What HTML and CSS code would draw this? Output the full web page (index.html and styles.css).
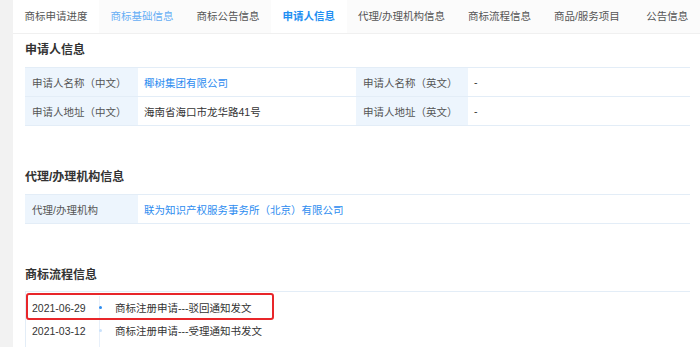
FILE: index.html
```html
<!DOCTYPE html>
<html lang="zh-CN">
<head>
<meta charset="utf-8">
<title>申请人信息</title>
<link rel="stylesheet" href="styles.css">
</head>
<body>
<div class="page">
  <aside class="side"></aside>
  <main class="main">
    <nav class="tabs">
      <span class="tab tab-first">商标申请进度</span>
      <span class="tab tab-hover">商标基础信息</span>
      <span class="tab">商标公告信息</span>
      <span class="tab tab-active">申请人信息</span>
      <span class="tab">代理/办理机构信息</span>
      <span class="tab">商标流程信息</span>
      <span class="tab">商品/服务项目</span>
      <span class="tab tab-last">公告信息</span>
    </nav>
    <div class="content">
      <section class="sec">
        <h2 class="sec-title">申请人信息</h2>
        <table class="info">
          <colgroup>
            <col class="c-label"><col class="c-value"><col class="c-label2"><col>
          </colgroup>
          <tr>
            <th>申请人名称（中文）</th>
            <td><a class="link">椰树集团有限公司</a></td>
            <th>申请人名称（英文）</th>
            <td>-</td>
          </tr>
          <tr>
            <th>申请人地址（中文）</th>
            <td>海南省海口市龙华路41号</td>
            <th>申请人地址（英文）</th>
            <td>-</td>
          </tr>
        </table>
      </section>
      <section class="sec">
        <h2 class="sec-title">代理/办理机构信息</h2>
        <table class="info">
          <colgroup>
            <col class="c-label"><col>
          </colgroup>
          <tr>
            <th>代理/办理机构</th>
            <td><a class="link">联为知识产权服务事务所（北京）有限公司</a></td>
          </tr>
        </table>
      </section>
      <section class="sec">
        <h2 class="sec-title sec-title-flow">商标流程信息</h2>
        <div class="flow">
          <div class="flow-row">
            <span class="flow-date">2021-06-29</span>
            <span class="flow-axis"><i class="dot dot-on"></i></span>
            <span class="flow-text">商标注册申请---驳回通知发文</span>
          </div>
          <div class="flow-row">
            <span class="flow-date">2021-03-12</span>
            <span class="flow-axis"><i class="dot"></i></span>
            <span class="flow-text">商标注册申请---受理通知书发文</span>
          </div>
          <div class="flow-row">
            <span class="flow-date">2020-12-29</span>
            <span class="flow-axis"><i class="dot"></i></span>
            <span class="flow-text">商标注册申请---申请收文</span>
          </div>
          <div class="mark"></div>
        </div>
      </section>
    </div>
  </main>
</div>
</body>
</html>
```

FILE: styles.css
```css
* { box-sizing: border-box; }
html, body { margin: 0; padding: 0; height: 100%; overflow: hidden; }
body {
  font-family: "Liberation Sans", "Noto Sans CJK SC", sans-serif;
  font-size: 10.5px;
  color: #333;
  background: #fff;
}
.page { display: flex; min-height: 100%; }
.side { flex: 0 0 13px; background: #f2f2f2; }
.main { flex: 1; background: #fff; padding-right: 10px; }

.tabs {
  display: flex;
  height: 34px;
  border-bottom: 1px solid #f0f0f0;
  white-space: nowrap;
  background: #fbfbfb;
}
.tab {
  padding: 0 11.5px;
  line-height: 33px;
  color: #555;
}
.tab-first { background: #fff; }
.tab-hover { color: #66aef5; }
.tab-active { color: #1f8ff2; font-weight: bold; background: #fff; }
.tab-last { padding-left: 15px; }

.content { padding-left: 12px; }
.sec { margin-bottom: 42px; }
.sec:first-child { padding-top: 7px; }
.sec-title {
  margin: 0 0 8px;
  font-size: 12px;
  line-height: 18px;
  font-weight: bold;
  color: #333;
}
.sec-title-flow { margin-bottom: 7px; }

.info {
  width: 665px;
  border-collapse: collapse;
  table-layout: fixed;
}
.c-label { width: 113px; }
.c-value { width: 218px; }
.c-label2 { width: 112px; }
.info th, .info td {
  height: 29px;
  padding: 0 7px;
  border-top: 1px solid #e3edf7;
  border-bottom: 1px solid #e3edf7;
  text-align: left;
  font-weight: normal;
  white-space: nowrap;
}
.info th { background: #edf5fd; color: #555; }
.info td { color: #333; padding-left: 6px; }
.link { color: #2d8cf0; text-decoration: none; }

.flow {
  position: relative;
  width: 665px;
  border-top: 1px solid #e3edf7;
  border-left: 1px solid #e3edf7;
  padding-top: 4px;
}
.flow-row {
  display: flex;
  align-items: center;
  height: 23px;
  padding-left: 6px;
}
.flow-date { width: 62px; color: #333; }
.flow-axis {
  position: relative;
  width: 12px;
  align-self: stretch;
  display: flex;
  align-items: center;
  justify-content: center;
}
.flow-axis::before {
  content: "";
  position: absolute;
  left: 5px;
  top: 0;
  bottom: 0;
  width: 1px;
  background: #e8f0fa;
}
.dot {
  position: relative;
  width: 3px;
  height: 3px;
  border-radius: 50%;
  background: #c9e1fb;
}
.dot-on { background: #2d8cf0; }
.flow-text { margin-left: 9px; color: #333; }
.mark {
  position: absolute;
  left: 0;
  top: 1px;
  width: 248px;
  height: 27px;
  border: 2px solid #e8262a;
  border-radius: 3px;
}
```
